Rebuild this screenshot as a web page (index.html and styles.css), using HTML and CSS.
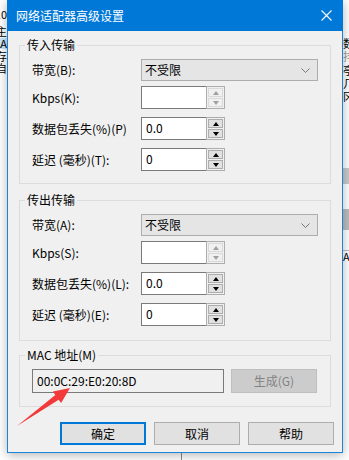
FILE: index.html
```html
<!DOCTYPE html>
<html lang="zh-CN">
<head>
  <meta charset="UTF-8" />
  <meta name="viewport" content="width=device-width, initial-scale=1.0"/>
  <title>网络适配器高级设置</title>
  <link rel="stylesheet" href="styles.css">
</head>
<body>
  <!-- windows behind the dialog -->
  <div class="behind behind-left">
    <div class="frag f-zero"><span>10</span></div>
    <div class="frag f-main"><span>默认主</span></div>
    <div class="frag f-sel"><span>AA</span></div>
    <div class="frag f-save"><span>保存</span></div>
    <div class="frag f-auto"><span>自</span></div>
  </div>
  <div class="behind behind-right">
    <div class="frag r1">数</div>
    <div class="frag r2">排</div>
    <div class="frag r3">亭</div>
    <div class="frag r4">几</div>
    <div class="frag r5">冈</div>
    <div class="bar bar1"></div>
    <div class="bar bar2"></div>
    <div class="frag r6">A</div>
  </div>
  <div class="below-line"></div>

  <div class="dialog">
    <div class="titlebar">
      <span class="title">网络适配器高级设置</span>
      <svg class="close" width="11" height="11" viewBox="0 0 11 11">
        <path d="M0.5 0.5 L10.5 10.5 M10.5 0.5 L0.5 10.5" stroke="#fff" stroke-width="1.1" fill="none"/>
      </svg>
    </div>

    <div class="dialog-body">
      <!-- incoming -->
      <fieldset class="group">
        <legend>传入传输</legend>
        <div class="row row-select">
          <label>带宽(B):</label>
          <div class="select">
            <span>不受限</span>
            <svg width="9" height="5" viewBox="0 0 9 5"><path d="M0.5 0.5 L4.5 4.5 L8.5 0.5" stroke="#777" fill="none"/></svg>
          </div>
        </div>
        <div class="row">
          <label>Kbps(K):</label>
          <div class="spin disabled">
            <div class="field"></div>
            <div class="spin-btns"><span class="up"></span><span class="down"></span></div>
          </div>
        </div>
        <div class="row">
          <label>数据包丢失(%)(P)</label>
          <div class="spin">
            <div class="field">0.0</div>
            <div class="spin-btns"><span class="up"></span><span class="down"></span></div>
          </div>
        </div>
        <div class="row">
          <label>延迟 (毫秒)(T):</label>
          <div class="spin">
            <div class="field">0</div>
            <div class="spin-btns"><span class="up"></span><span class="down"></span></div>
          </div>
        </div>
      </fieldset>

      <!-- outgoing -->
      <fieldset class="group group-out">
        <legend>传出传输</legend>
        <div class="row row-select">
          <label>带宽(A):</label>
          <div class="select">
            <span>不受限</span>
            <svg width="9" height="5" viewBox="0 0 9 5"><path d="M0.5 0.5 L4.5 4.5 L8.5 0.5" stroke="#777" fill="none"/></svg>
          </div>
        </div>
        <div class="row">
          <label>Kbps(S):</label>
          <div class="spin disabled">
            <div class="field"></div>
            <div class="spin-btns"><span class="up"></span><span class="down"></span></div>
          </div>
        </div>
        <div class="row">
          <label>数据包丢失(%)(L):</label>
          <div class="spin">
            <div class="field">0.0</div>
            <div class="spin-btns"><span class="up"></span><span class="down"></span></div>
          </div>
        </div>
        <div class="row">
          <label>延迟 (毫秒)(E):</label>
          <div class="spin">
            <div class="field">0</div>
            <div class="spin-btns"><span class="up"></span><span class="down"></span></div>
          </div>
        </div>
      </fieldset>

      <!-- MAC -->
      <fieldset class="group group-mac">
        <legend>MAC 地址(M)</legend>
        <div class="mac-row">
          <div class="mac-field">00:0C:29:E0:20:8D</div>
          <button class="btn btn-disabled">生成(G)</button>
        </div>
      </fieldset>

      <div class="actions">
        <button class="btn btn-default">确定</button>
        <button class="btn">取消</button>
        <button class="btn">帮助</button>
      </div>
    </div>
  </div>

  <svg class="arrow" width="80" height="60" viewBox="0 0 80 60">
    <polygon points="7,46 45.3,14.9 42.9,11.6 60,8 51.1,23 48.7,19.7" fill="#f23a3a"/>
  </svg>
</body>
</html>
```

FILE: styles.css
```css
body {
  margin: 0;
  width: 349px;
  height: 460px;
  overflow: hidden;
  position: relative;
  background-color: #ffffff;
  font-family: "Noto Sans CJK SC", "Noto Sans", sans-serif;
  font-size: 12px;
  color: #000;
}

/* Windows behind */
.behind {
  position: absolute;
  top: 0;
  height: 460px;
  overflow: hidden;
}
.behind-left {
  left: 0;
  width: 7px;
}
.behind-right {
  left: 343px;
  width: 6px;
}
.frag {
  position: absolute;
  height: 11px;
  line-height: 11px;
  font-size: 11px;
  white-space: nowrap;
}
.behind-left .frag {
  right: 0;
  display: flex;
  justify-content: flex-end;
  width: 7px;
  overflow: hidden;
}
.f-zero { top: 9px; }
.f-main { top: 26px; }
.f-sel { top: 38px; background: #cce8ff; }
.f-save { top: 51px; }
.f-auto { top: 63px; }
.behind-right .frag { left: 0; }
.r1 { top: 38px; }
.r2 { top: 51px; color: #9a9a9a; }
.r3 { top: 65px; }
.r4 { top: 78px; }
.r5 { top: 91px; }
.r6 { top: 250px; border-top: 1px solid #c0c0c0; }
.bar {
  position: absolute;
  left: 0;
  width: 6px;
}
.bar1 { top: 168px; height: 16px; background: #c9c9c9; }
.bar2 { top: 209px; height: 21px; background: #bdbdbd; }
.below-line {
  position: absolute;
  left: 181px;
  top: 452px;
  width: 1px;
  height: 8px;
  background: #8a8a8a;
}

/* Dialog */
.dialog {
  position: absolute;
  left: 7px;
  top: 0;
  width: 334px;
  border: 1px solid #1b84d8;
  border-top: none;
  background-color: #f0f0f0;
  box-shadow: 0 2px 10px rgba(0, 0, 0, 0.3);
}
.titlebar {
  height: 31px;
  margin: 0 -1px;
  padding: 0 0 0 9px;
  background-color: #0078d7;
  color: #fff;
  display: flex;
  align-items: center;
  justify-content: space-between;
}
.title {
  font-size: 12px;
  line-height: 16px;
}
.close {
  margin-right: 11px;
}
.dialog-body {
  padding: 0 0 7px;
}

/* Group boxes */
.group {
  margin: 6px 11px 0;
  padding: 6px 0 12px;
  border: 1px solid #dcdcdc;
  min-width: 0;
}
.group legend {
  margin-left: 5px;
  padding: 0 2px;
  line-height: 16px;
  height: 16px;
}
.group-out {
  margin-top: 8px;
  padding-bottom: 14px;
}
.group-mac {
  margin-top: 6px;
  padding-bottom: 13px;
}
.row {
  display: flex;
  align-items: center;
  padding: 0 12px;
  margin-top: 8px;
  height: 23px;
}
.row-select {
  margin-top: 0;
  height: 22px;
  margin-bottom: -3px;
}
.row label {
  width: 109px;
  flex-shrink: 0;
  line-height: 16px;
}

/* Combo box */
.select {
  width: 177px;
  height: 22px;
  box-sizing: border-box;
  border: 1px solid #adadad;
  background-color: #e5e5e5;
  display: flex;
  align-items: center;
  justify-content: space-between;
  padding: 0 7px 0 3px;
  line-height: 16px;
}

/* Spin edit */
.spin {
  display: flex;
  height: 23px;
}
.field {
  width: 65px;
  box-sizing: border-box;
  border: 1px solid #7a7a7a;
  border-right: none;
  background-color: #fff;
  padding: 0 4px;
  line-height: 19px;
}
.spin-btns {
  width: 19px;
  box-sizing: border-box;
  border: 1px solid #adadad;
  padding: 1px;
  display: flex;
  flex-direction: column;
  gap: 1px;
  background-color: #f0f0f0;
}
.spin-btns span {
  flex: 1;
  border: 1px solid #adadad;
  background-color: #e1e1e1;
  display: flex;
  align-items: center;
  justify-content: center;
}
.spin-btns span::after {
  content: "";
  border-left: 3.5px solid transparent;
  border-right: 3.5px solid transparent;
}
.spin-btns .up::after {
  border-bottom: 4px solid #000;
}
.spin-btns .down::after {
  border-top: 4px solid #000;
}
.spin.disabled .spin-btns span {
  border-color: #d9d9d9;
  background-color: #f0f0f0;
}
.spin.disabled .up::after {
  border-bottom-color: #a0a0a0;
}
.spin.disabled .down::after {
  border-top-color: #a0a0a0;
}

/* MAC */
.mac-row {
  display: flex;
  gap: 7px;
  padding: 0 12px;
}
.mac-field {
  width: 192px;
  height: 24px;
  box-sizing: border-box;
  border: 1px solid #7a7a7a;
  background-color: #f0f0f0;
  padding: 0 4px;
  line-height: 21px;
}

/* Buttons */
.btn {
  width: 86px;
  height: 23px;
  box-sizing: border-box;
  border: 1px solid #adadad;
  background-color: #e1e1e1;
  font-family: "Noto Sans CJK SC", "Noto Sans", sans-serif;
  font-size: 12px;
  color: #000;
  padding: 0;
  line-height: 16px;
}
.btn-disabled {
  height: 24px;
  background-color: #cccccc;
  border-color: #bfbfbf;
  color: #838383;
}
.btn-default {
  border: 2px solid #0078d7;
}
.actions {
  display: flex;
  justify-content: flex-end;
  gap: 8px;
  padding-right: 8px;
  margin-top: 15px;
}

/* Annotation */
.arrow {
  position: absolute;
  left: 10px;
  top: 380px;
}
```
